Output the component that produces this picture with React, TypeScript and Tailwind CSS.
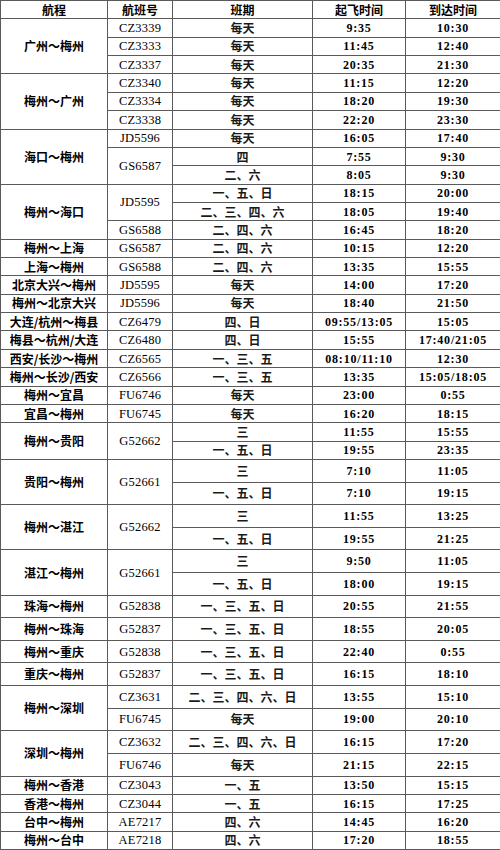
import React from "react";

type Row = {
  r?: string;
  rs?: number;
  c?: string;
  cs?: number;
  d: string;
  t1: string;
  t2: string;
  tall?: boolean;
};

const rows: Row[] = [
  { r: "广州～梅州", rs: 3, c: "CZ3339", d: "每天", t1: "9:35", t2: "10:30" },
  { c: "CZ3333", d: "每天", t1: "11:45", t2: "12:40" },
  { c: "CZ3337", d: "每天", t1: "20:35", t2: "21:30" },
  { r: "梅州～广州", rs: 3, c: "CZ3340", d: "每天", t1: "11:15", t2: "12:20" },
  { c: "CZ3334", d: "每天", t1: "18:20", t2: "19:30" },
  { c: "CZ3338", d: "每天", t1: "22:20", t2: "23:30" },
  { r: "海口～梅州", rs: 3, c: "JD5596", d: "每天", t1: "16:05", t2: "17:40" },
  { c: "GS6587", cs: 2, d: "四", t1: "7:55", t2: "9:30" },
  { d: "二、六", t1: "8:05", t2: "9:30" },
  { r: "梅州～海口", rs: 3, c: "JD5595", cs: 2, d: "一、五、日", t1: "18:15", t2: "20:00" },
  { d: "二、三、四、六", t1: "18:05", t2: "19:40" },
  { c: "GS6588", d: "二、四、六", t1: "16:45", t2: "18:20" },
  { r: "梅州～上海", c: "GS6587", d: "二、四、六", t1: "10:15", t2: "12:20" },
  { r: "上海～梅州", c: "GS6588", d: "二、四、六", t1: "13:35", t2: "15:55" },
  { r: "北京大兴～梅州", c: "JD5595", d: "每天", t1: "14:00", t2: "17:20" },
  { r: "梅州～北京大兴", c: "JD5596", d: "每天", t1: "18:40", t2: "21:50" },
  { r: "大连/杭州～梅县", c: "CZ6479", d: "四、日", t1: "09:55/13:05", t2: "15:05" },
  { r: "梅县～杭州/大连", c: "CZ6480", d: "四、日", t1: "15:55", t2: "17:40/21:05" },
  { r: "西安/长沙～梅州", c: "CZ6565", d: "一、三、五", t1: "08:10/11:10", t2: "12:30" },
  { r: "梅州～长沙/西安", c: "CZ6566", d: "一、三、五", t1: "13:35", t2: "15:05/18:05" },
  { r: "梅州～宜昌", c: "FU6746", d: "每天", t1: "23:00", t2: "0:55" },
  { r: "宜昌～梅州", c: "FU6745", d: "每天", t1: "16:20", t2: "18:15" },
  { r: "梅州～贵阳", rs: 2, c: "G52662", cs: 2, d: "三", t1: "11:55", t2: "15:55" },
  { d: "一、五、日", t1: "19:55", t2: "23:35" },
  { r: "贵阳～梅州", rs: 2, c: "G52661", cs: 2, d: "三", t1: "7:10", t2: "11:05", tall: true },
  { d: "一、五、日", t1: "7:10", t2: "19:15", tall: true },
  { r: "梅州～湛江", rs: 2, c: "G52662", cs: 2, d: "三", t1: "11:55", t2: "13:25", tall: true },
  { d: "一、五、日", t1: "19:55", t2: "21:25", tall: true },
  { r: "湛江～梅州", rs: 2, c: "G52661", cs: 2, d: "三", t1: "9:50", t2: "11:05", tall: true },
  { d: "一、五、日", t1: "18:00", t2: "19:15", tall: true },
  { r: "珠海～梅州", c: "G52838", d: "一、三、五、日", t1: "20:55", t2: "21:55", tall: true },
  { r: "梅州～珠海", c: "G52837", d: "一、三、五、日", t1: "18:55", t2: "20:05", tall: true },
  { r: "梅州～重庆", c: "G52838", d: "一、三、五、日", t1: "22:40", t2: "0:55", tall: true },
  { r: "重庆～梅州", c: "G52837", d: "一、三、五、日", t1: "16:15", t2: "18:10", tall: true },
  { r: "梅州～深圳", rs: 2, c: "CZ3631", d: "二、三、四、六、日", t1: "13:55", t2: "15:10", tall: true },
  { c: "FU6745", d: "每天", t1: "19:00", t2: "20:10", tall: true },
  { r: "深圳～梅州", rs: 2, c: "CZ3632", d: "二、三、四、六、日", t1: "16:15", t2: "17:20", tall: true },
  { c: "FU6746", d: "每天", t1: "21:15", t2: "22:15", tall: true },
  { r: "梅州～香港", c: "CZ3043", d: "一、五", t1: "13:50", t2: "15:15" },
  { r: "香港～梅州", c: "CZ3044", d: "一、五", t1: "16:15", t2: "17:25" },
  { r: "台中～梅州", c: "AE7217", d: "四、六", t1: "14:45", t2: "16:20" },
  { r: "梅州～台中", c: "AE7218", d: "四、六", t1: "17:20", t2: "18:55" },
];

const cell = "border border-[#5a5a5a] p-0 text-center align-middle leading-[14px] whitespace-nowrap";
const cjkBold =
  "font-[family-name:'Noto_Sans_CJK_SC',sans-serif] font-bold text-[12px] text-black";
const cjkDay =
  "font-[family-name:'Noto_Sans_CJK_SC',sans-serif] font-bold text-[12px] text-[#1a1a1a]";
const codeCls =
  "font-[family-name:'Liberation_Serif','Noto_Sans_CJK_SC',serif] font-normal text-[12.5px] tracking-[0.2px] text-black";
const timeCls =
  "font-[family-name:'Liberation_Serif','Noto_Sans_CJK_SC',serif] font-bold text-[12px] tracking-[0.8px] text-black";

export default function App() {
  return (
    <div className="w-[500px] h-[850px] bg-white overflow-hidden">
      <table className="w-[500px] table-fixed border-collapse bg-white">
        <colgroup>
          <col className="w-[107px]" />
          <col className="w-[65px]" />
          <col className="w-[140px]" />
          <col className="w-[93px]" />
          <col className="w-[95px]" />
        </colgroup>
        <thead>
          <tr className="h-[18.36px]">
            <th className={`${cell} ${cjkBold}`}>航程</th>
            <th className={`${cell} ${cjkBold}`}>航班号</th>
            <th className={`${cell} ${cjkBold}`}>班期</th>
            <th className={`${cell} ${cjkBold}`}>起飞时间</th>
            <th className={`${cell} ${cjkBold}`}>到达时间</th>
          </tr>
        </thead>
        <tbody>
          {rows.map((row, i) => (
            <tr key={i} className={row.tall ? "h-[22.62px]" : "h-[18.36px]"}>
              {row.r !== undefined && (
                <td rowSpan={row.rs ?? 1} className={`${cell} ${cjkBold}`}>
                  {row.r}
                </td>
              )}
              {row.c !== undefined && (
                <td rowSpan={row.cs ?? 1} className={`${cell} ${codeCls}`}>
                  {row.c}
                </td>
              )}
              <td className={`${cell} ${cjkDay}`}>{row.d}</td>
              <td className={`${cell} ${timeCls}`}>{row.t1}</td>
              <td className={`${cell} ${timeCls}`}>{row.t2}</td>
            </tr>
          ))}
        </tbody>
      </table>
    </div>
  );
}
